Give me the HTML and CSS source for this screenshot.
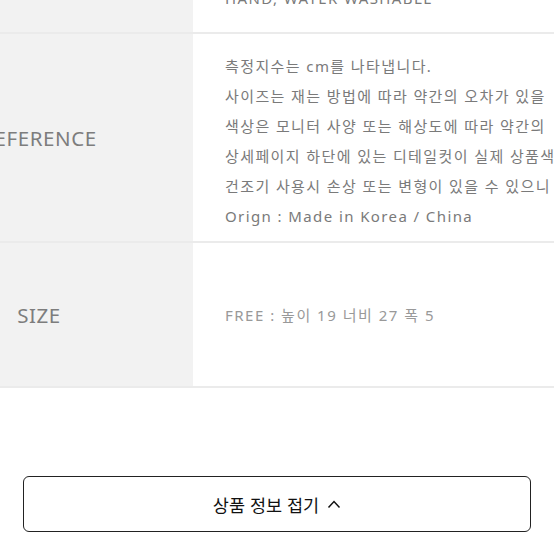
FILE: index.html
```html
<!DOCTYPE html>
<html lang="ko">
<head>
    <meta charset="UTF-8">
    <meta name="viewport" content="width=device-width, initial-scale=1.0">
    <title>상품 정보</title>
    <link rel="stylesheet" href="styles.css">
</head>
<body>

    <div class="info-table">
        <div class="row row-care">
            <div class="label"></div>
            <div class="value">
                <p>HAND, WATER WASHABLE</p>
            </div>
        </div>

        <div class="row row-ref">
            <div class="label">REFERENCE</div>
            <div class="value">
                <p>측정지수는 cm를 나타냅니다.</p>
                <p>사이즈는 재는 방법에 따라 약간의 오차가 있을</p>
                <p>색상은 모니터 사양 또는 해상도에 따라 약간의</p>
                <p>상세페이지 하단에 있는 디테일컷이 실제 상품색</p>
                <p>건조기 사용시 손상 또는 변형이 있을 수 있으니</p>
                <p>Orign : Made in Korea / China</p>
            </div>
        </div>

        <div class="row row-size">
            <div class="label">SIZE</div>
            <div class="value">
                <p class="size-text">FREE : 높이 19 너비 27 폭 5</p>
            </div>
        </div>
    </div>

    <button class="fold-btn">
        상품 정보 접기
        <svg width="14" height="10" viewBox="0 0 14 10"><path d="M1.5 8.5 L7 2.5 L12.5 8.5" fill="none" stroke="#111" stroke-width="1.5"/></svg>
    </button>

</body>
</html>
```

FILE: styles.css
```css
body {
    margin: 0;
    background-color: #fff;
    font-family: "Noto Sans", "Noto Sans CJK KR", sans-serif;
    overflow: hidden;
    width: 554px;
    height: 554px;
}
.info-table {
    margin-top: -25px;
    margin-left: -115px;
    width: 700px;
}
.row {
    display: grid;
    grid-template-columns: 308px 1fr;
    border-bottom: 2px solid #ebebeb;
}
.label {
    background-color: #f2f2f2;
    color: #7d7d7d;
    font-size: 20.5px;
    letter-spacing: 0.6px;
    display: flex;
    align-items: center;
    justify-content: center;
}
.value {
    padding-left: 32px;
    color: #7a7a7a;
    font-size: 15px;
    letter-spacing: 1.4px;
    white-space: nowrap;
}
.value p {
    margin: 0;
    line-height: 30px;
}
.row-care {
    height: 57px;
}
.row-care .value {
    padding-top: 8px;
}
.row-ref .value {
    padding: 17px 0 10px 32px;
}
.row-size {
    height: 143px;
}
.row-size .value {
    display: flex;
    align-items: center;
}
.size-text {
    color: #999;
    letter-spacing: 1.5px;
}
.fold-btn {
    display: flex;
    align-items: center;
    justify-content: center;
    gap: 8px;
    width: 508px;
    height: 56px;
    margin: 88px 0 0 23px;
    background-color: #fff;
    border: 1.5px solid #222;
    border-radius: 6px;
    font-family: "Noto Sans CJK KR", sans-serif;
    font-size: 17.5px;
    color: #111;
    padding: 0;
}
```
